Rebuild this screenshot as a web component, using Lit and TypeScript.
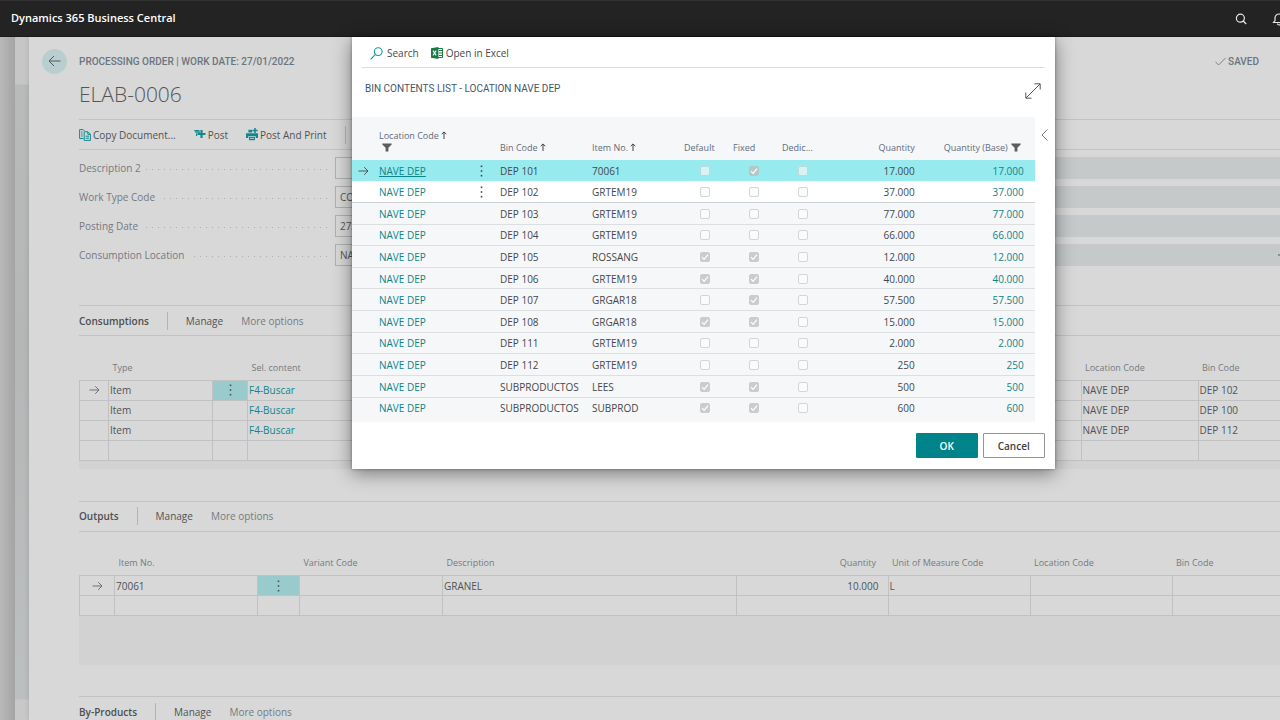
import { LitElement, html, css, svg, nothing } from "lit";
import { customElement } from "lit/decorators.js";
import { classMap } from "lit/directives/class-map.js";

type BinRow = [bin: string, item: string, def: boolean, fixed: boolean, qty: string];

const BINS: BinRow[] = [
  ["DEP 101", "70061", false, true, "17.000"],
  ["DEP 102", "GRTEM19", false, false, "37.000"],
  ["DEP 103", "GRTEM19", false, false, "77.000"],
  ["DEP 104", "GRTEM19", false, false, "66.000"],
  ["DEP 105", "ROSSANG", true, true, "12.000"],
  ["DEP 106", "GRTEM19", true, true, "40.000"],
  ["DEP 107", "GRGAR18", false, true, "57.500"],
  ["DEP 108", "GRGAR18", true, true, "15.000"],
  ["DEP 111", "GRTEM19", false, false, "2.000"],
  ["DEP 112", "GRTEM19", false, false, "250"],
  ["SUBPRODUCTOS", "LEES", true, true, "500"],
  ["SUBPRODUCTOS", "SUBPROD", true, true, "600"],
];

const FIELDS: [label: string, value: string][] = [
  ["Description 2", ""],
  ["Work Type Code", "CONS"],
  ["Posting Date", "27/01/2022"],
  ["Consumption Location", "NAVE DEP"],
];

const CONSUMPTION_BINS = ["DEP 102", "DEP 100", "DEP 112"];

const arrowRight = svg`<path d="M0.5 5H10M6.2 1.2L10 5L6.2 8.8" fill="none" stroke="currentColor" stroke-width="0.9"/>`;
const rowArrow = html`<svg class="row-arrow" width="11" height="10" viewBox="0 0 11 10">${arrowRight}</svg>`;
const dots = html`<svg width="3" height="12" viewBox="0 0 3 12" fill="currentColor">
  <rect x="0.7" y="0.5" width="1.6" height="1.6" /><rect x="0.7" y="5.2" width="1.6" height="1.6" /><rect x="0.7" y="9.9" width="1.6" height="1.6" />
</svg>`;
const funnel = html`<svg class="funnel" width="10" height="9" viewBox="0 0 10 9"><path d="M0.3 0.5H9.7V1.6L6.4 4.8V8.5H3.6V4.8L0.3 1.6Z" fill="#5c5c5c"/></svg>`;
const sortUp = html`<svg class="sort" width="6" height="8" viewBox="0 0 6 8"><path d="M3 8V1M0.7 3.2L3 0.9L5.3 3.2" fill="none" stroke="#444" stroke-width="1"/></svg>`;

@customElement("app-root")
export class AppRoot extends LitElement {
  static styles = css`
    :host {
      display: flex;
      flex-direction: column;
      height: 100vh;
      overflow: hidden;
      font-family: "Open Sans", "Noto Sans", sans-serif;
      font-size: 10px;
      line-height: 14px;
      color: #505355;
      background: #d8d8d8;
    }
    * { box-sizing: border-box; }
    svg { display: block; flex: none; }
    button {
      font: inherit;
      color: inherit;
      background: none;
      border: 0;
      padding: 0;
      margin: 0;
      display: flex;
      align-items: center;
      white-space: nowrap;
    }
    a { color: #0d858b; text-decoration: none; font-weight: 500; }
    h1, h2, h3 { margin: 0; font-size: inherit; font-weight: 400; }

    .topbar {
      flex: none;
      height: 37px;
      display: flex;
      align-items: center;
      padding: 0 0 2px 11px;
      background: #232323;
      border-top: 1px solid #333;
      border-bottom: 1px solid #1a1a1a;
      color: #fff;
      overflow: hidden;
    }
    .brand { font-size: 11px; font-weight: 600; color: #fff; margin-right: auto; }
    .top-icons { display: flex; gap: 25px; margin-right: -6px; padding-top: 3px; }

    .stage {
      position: relative;
      flex: 1;
      min-height: 0;
      display: flex;
      padding-left: 15px;
      background: linear-gradient(90deg, #b9b9b9 0, #a4a4a4 15px);
    }
    .under {
      flex: 1;
      min-width: 0;
      display: flex;
      padding-left: 14px;
      background: linear-gradient(180deg, #c6c6c6 0, #c6c6c6 47px, #b9bbbb 48px, #b5b6b6 300px, #bcbfc0 662px, #c8c8c8 663px);
    }
    .sheet {
      flex: 1;
      min-width: 0;
      background: #d8d8d8;
      padding: 11px 0 0 13px;
      box-shadow: -1px 0 4px rgba(0, 0, 0, 0.1);
      overflow: hidden;
    }
    .head { display: flex; align-items: center; height: 26px; }
    .back {
      width: 25px;
      height: 25px;
      border-radius: 50%;
      background: #b9cfcf;
      justify-content: center;
      margin-right: 12px;
      color: #505a5c;
    }
    .caption { font-family: Roboto, "Open Sans", sans-serif; font-weight: 500; color: #6b7580; padding-top: 1px; }
    .saved { margin-left: auto; padding-right: 21px; display: flex; align-items: center; gap: 2px; }
    .content { padding-left: 37px; }
    .title { font-size: 21px; line-height: 28px; font-weight: 300; padding: 6px 0 11px; color: #555; }

    .actions {
      height: 31px;
      display: flex;
      align-items: center;
      border-top: 1px solid #c2c4c4;
      border-bottom: 1px solid #c2c4c4;
      gap: 18px;
    }
    .actions button { gap: 2px; }
    .bar { width: 1px; height: 18px; background: #b2b4b6; }
    .actions .bar { margin-right: auto; }

    .fields {
      display: grid;
      grid-template-columns: 1fr 1fr;
      column-gap: 20px;
      row-gap: 7px;
      padding: 7px 0 39px;
    }
    .field { display: flex; align-items: center; height: 22px; }
    .field label { color: #727a82; white-space: nowrap; }
    .leader {
      height: 1px;
      margin: 2px 8px 0 5px;
      flex: 1;
      background: repeating-linear-gradient(270deg, #aaadb0 0, #aaadb0 1px, transparent 1px, transparent 6px);
    }
    .name { width: 256px; display: flex; align-items: center; }
    .field input {
      flex: 1;
      min-width: 0;
      height: 22px;
      font: inherit;
      color: #555;
      background: transparent;
      border: 1px solid #aeb0b2;
      padding: 0 4px;
    }
    .field .locked { background: #c5c9ca; border-color: #c5c9ca; }
    .assist { position: relative; }
    .more { position: absolute; right: 0; height: 22px; }

    .part {
      height: 31px;
      display: flex;
      align-items: center;
      gap: 18px;
      border-top: 1px solid #c2c4c4;
      border-bottom: 1px solid #c2c4c4;
    }
    .part h3 { font-weight: 600; color: #4c4f50; }
    .part .soft { color: #747b82; }

    table { border-collapse: collapse; table-layout: fixed; width: 100%; }
    th { font-weight: 400; font-size: 9px; line-height: 12px; text-align: left; white-space: nowrap; padding: 0; }
    td { padding: 0; white-space: nowrap; }

    .lines th { height: 44px; vertical-align: bottom; padding: 0 4px 6px; color: #747b82; }
    .lines td { height: 20px; border: 1px solid #bfc1c2; padding: 0 1px; }
    .lines td:last-child { border-right: 0; }
    .lines td.num { text-align: right; padding-right: 9px; }
    .lines th.num { text-align: right; padding-right: 12px; }
    .lines .mark { color: #666; }
    .lines svg { margin: 0 auto; }
    .lines .pick { background: #99cbcc; color: #456; }
    .filler { background: #d2d2d2; }
    .filler.short { height: 8px; margin-bottom: 32px; }
    .filler.tall { height: 49px; margin-bottom: 31px; }

    .dialog {
      position: absolute;
      top: 0;
      left: 27.5%;
      right: 17.6%;
      background: #fff;
      box-shadow: 0 4px 18px rgba(0, 0, 0, 0.45), 0 0 3px rgba(0, 0, 0, 0.35);
      color: #44484b;
    }
    .tools {
      display: flex;
      align-items: center;
      height: 31px;
      margin: 0 10px;
      padding: 2px 0 0 8px;
      border-bottom: 1px solid #dcdddd;
      gap: 12px;
    }
    .tools button { gap: 3px; }
    .tools .find { gap: 4px; }
    .dialog-head { display: flex; align-items: center; justify-content: space-between; height: 49px; padding: 0 14px 8px 13px; }
    .dialog-head .caption { font-weight: 400; color: #44566c; }
    .dialog-head button { padding-top: 4px; }
    .grid-wrap { display: flex; align-items: flex-start; }
    .grid-box { flex: 1; min-width: 0; background: #f6f7f9; padding-bottom: 4px; }
    .expander { width: 20px; justify-content: center; padding-top: 12px; }
    .bins { height: 301px; }
    .bins th { height: 43px; vertical-align: bottom; padding-bottom: 6px; color: #5f6c7b; }
    .bins th svg { display: inline-block; }
    .bins .funnel { margin-left: 3px; vertical-align: -1px; }
    .bins .sort { margin-left: 2px; }
    .bins td { padding-top: 1px; }
    .bins tbody tr { border-bottom: 1px solid #dcdfe2; }
    .bins tbody tr:last-child { border-bottom: 0; }
    .bins tbody tr.current { background: #97ebee; border-bottom-color: #97ebee; }
    .bins tbody tr.hover { background: #fff; border-bottom-color: #cfd2d5; }
    .bins .lead svg { margin-left: 6px; }
    .bins .gap { padding-left: 8px; }
    .bins .num { text-align: right; padding-right: 8px; }
    .bins .num.last { padding-right: 11px; }
    .bins th.num.last { padding-right: 14px; }
    .bins .tick { padding-left: 24px; }
    .current .loc { text-decoration: underline; }
    .tick input {
      appearance: none;
      display: block;
      width: 10px;
      height: 10px;
      margin: 0;
      border: 1px solid #d3d5d6;
      border-radius: 2px;
      background: #fafbfb;
    }
    .current .tick input { background: #d9f3f4; border-color: #bcdadb; }
    .tick input:checked,
    .current .tick input:checked {
      border-color: #cbcdcd;
      background: #cbcdcd url("data:image/svg+xml,%3Csvg xmlns='http://www.w3.org/2000/svg' viewBox='0 0 8 8'%3E%3Cpath d='M1 4.2L3.1 6.3L7 1.6' fill='none' stroke='white' stroke-width='1.2'/%3E%3C/svg%3E") center / 8px 8px no-repeat;
    }
    .current .tick input:checked { background-color: #b5c8c8; border-color: #b5c8c8; }

    .buttons { display: flex; justify-content: flex-end; gap: 5px; padding: 11px 10px 11px 0; }
    .buttons button {
      width: 62px;
      height: 25px;
      justify-content: center;
      border: 1px solid #929496;
      border-radius: 1px;
      font-weight: 600;
      color: #3c3f42;
    }
    .buttons .ok { background: #008489; border-color: #008489; color: #fff; }
  `;

  private part(title: string) {
    return html`<div class="part">
      <h3>${title}</h3>
      <span class="bar"></span>
      <button>Manage</button>
      <button class="soft">More options</button>
    </div>`;
  }

  private tick(label: string, on: boolean) {
    return html`<td class="tick"><input type="checkbox" aria-label=${label} .checked=${on} disabled /></td>`;
  }

  private sheet() {
    return html`
      <main class="sheet">
        <div class="head">
          <button class="back" aria-label="Back">
            <svg width="13" height="12" viewBox="0 0 13 12"><path d="M12.5 6H1M6 1L1 6L6 11" fill="none" stroke="currentColor" /></svg>
          </button>
          <h1 class="caption">PROCESSING ORDER | WORK DATE: 27/01/2022</h1>
          <span class="saved caption">
            <svg width="11" height="9" viewBox="0 0 11 9"><path d="M0.5 4.8L3.6 8L10.5 1" fill="none" stroke="#7b848c" /></svg>SAVED
          </span>
        </div>
        <div class="content">
          <h2 class="title">ELAB-0006</h2>
          <div class="actions">
            <button>
              <svg width="12" height="12" viewBox="0 0 12 12" fill="none" stroke="#12888e">
                <path d="M4.5 9.5H0.6V0.6H4.2L5.6 2" /><path d="M2 3H3.6M2 5H3.6M2 7H3.6" />
                <path d="M5.2 2.8H9L11.4 5.2V11.4H5.2Z M8.8 3V5.4H11.2" /><path d="M6.6 7.2H10M6.6 9.2H10" />
              </svg>Copy Document...
            </button>
            <button>
              <svg width="12" height="11" viewBox="0 0 12 11">
                <path d="M7.5 1V9M3.5 5H11.5" stroke="#12888e" stroke-width="2.2" fill="none" />
                <path d="M0.3 1.6H5.4M1.2 3.2H6M2.6 4.6V7" stroke="#12888e" stroke-width="1.2" fill="none" />
              </svg>Post
            </button>
            <button>
              <svg width="12" height="13" viewBox="0 0 12 13">
                <path d="M0 5.2H12V10H9.8V8.2H2.2V10H0Z" fill="#12888e" />
                <path d="M3 9H9V12.2H3Z" fill="#12888e" /><path d="M4 10.4H8" stroke="#d8d8d8" stroke-width="0.8" />
                <path d="M2.4 4.4V1.8H6.2V4.4Z" fill="#12888e" />
                <path d="M9 0V5M6.6 2.4H11.6" stroke="#12888e" stroke-width="1.5" />
              </svg>Post And Print
            </button>
            <span class="bar"></span>
          </div>
          <div class="fields">
            ${FIELDS.map(
              ([label, value], i) => html`
                <div class="field">
                  <span class="name"><label for="field-${i}">${label}</label><span class="leader"></span></span>
                  <input id="field-${i}" type="text" .value=${value} />
                </div>
                <div class="field assist">
                  <input class="locked" type="text" aria-label="Details ${i + 1}" readonly />
                  ${i === 3
                    ? html`<button class="more" aria-label="Show more">
                        <svg width="2" height="2" viewBox="0 0 2 2"><path d="M0 1H2" stroke="#555" /></svg>
                      </button>`
                    : nothing}
                </div>
              `,
            )}
          </div>

          ${this.part("Consumptions")}
          <table class="lines">
            <colgroup>
              <col width="29" /><col width="104" /><col width="35" /><col /><col width="117" /><col width="82" />
            </colgroup>
            <thead>
              <tr><th></th><th>Type</th><th></th><th>Sel. content</th><th>Location Code</th><th>Bin Code</th></tr>
            </thead>
            <tbody>
              ${CONSUMPTION_BINS.map(
                (bin, i) => html`<tr>
                  <td class="mark">${i === 0 ? rowArrow : nothing}</td>
                  <td>Item</td>
                  <td class=${classMap({ pick: i === 0 })}>${i === 0 ? dots : nothing}</td>
                  <td><a href="#">F4-Buscar</a></td>
                  <td>NAVE DEP</td>
                  <td>${bin}</td>
                </tr>`,
              )}
              <tr><td></td><td></td><td></td><td></td><td></td><td></td></tr>
            </tbody>
          </table>
          <div class="filler short"></div>

          ${this.part("Outputs")}
          <table class="lines">
            <colgroup>
              <col width="35" /><col width="143" /><col width="42" /><col width="143" /><col /><col width="152" />
              <col width="142" /><col width="142" /><col width="108" />
            </colgroup>
            <thead>
              <tr>
                <th></th><th>Item No.</th><th></th><th>Variant Code</th><th>Description</th><th class="num">Quantity</th>
                <th>Unit of Measure Code</th><th>Location Code</th><th>Bin Code</th>
              </tr>
            </thead>
            <tbody>
              <tr>
                <td class="mark">${rowArrow}</td><td>70061</td><td class="pick">${dots}</td><td></td><td>GRANEL</td>
                <td class="num">10.000</td><td>L</td><td></td><td></td>
              </tr>
              <tr><td></td><td></td><td></td><td></td><td></td><td></td><td></td><td></td><td></td></tr>
            </tbody>
          </table>
          <div class="filler tall"></div>

          ${this.part("By-Products")}
        </div>
      </main>
    `;
  }

  private dialog() {
    return html`
      <section class="dialog" role="dialog" aria-label="Bin Contents List">
        <div class="tools">
          <button class="find">
            <svg width="13" height="13" viewBox="0 0 13 13" fill="none" stroke="#12989e" stroke-width="1.1">
              <circle cx="8.2" cy="4.6" r="3.9" /><path d="M5.4 7.4L0.6 12.4" />
            </svg>Search
          </button>
          <button>
            <svg width="12" height="12" viewBox="0 0 12 12">
              <path d="M7 1.5H11.5V10.5H7" fill="#fff" stroke="#187a45" />
              <path d="M8 3.5H11M8 6H11M8 8.5H11" stroke="#187a45" stroke-width="1.1" />
              <path d="M0 1.2L7.4 0V12L0 10.8Z" fill="#187a45" />
              <path d="M2 3.6L5.2 8.4M5.2 3.6L2 8.4" stroke="#fff" stroke-width="1.1" />
            </svg>Open in Excel
          </button>
        </div>
        <div class="dialog-head">
          <h2 class="caption">BIN CONTENTS LIST - LOCATION NAVE DEP</h2>
          <button aria-label="Expand">
            <svg width="16" height="16" viewBox="0 0 16 16" fill="none" stroke="#555">
              <path d="M1 15L15 1M9.5 0.8H15.2V6.5M0.8 9.5V15.2H6.5" />
            </svg>
          </button>
        </div>
        <div class="grid-wrap">
          <div class="grid-box">
            <table class="bins">
              <colgroup>
                <col width="27" /><col width="93" /><col width="20" /><col width="92" /><col width="92" /><col width="49" />
                <col width="49" /><col width="49" /><col /><col width="112" />
              </colgroup>
              <thead>
                <tr>
                  <th></th>
                  <th>Location Code${sortUp}<br />${funnel}</th>
                  <th></th>
                  <th class="gap">Bin Code${sortUp}</th>
                  <th class="gap">Item No.${sortUp}</th>
                  <th class="gap">Default</th>
                  <th class="gap">Fixed</th>
                  <th class="gap">Dedic...</th>
                  <th class="num">Quantity</th>
                  <th class="num last">Quantity (Base)${funnel}</th>
                </tr>
              </thead>
              <tbody>
                ${BINS.map(
                  ([bin, item, def, fixed, qty], i) => html`<tr class=${classMap({ current: i === 0, hover: i === 1 })}>
                    <td class="lead">${i === 0 ? rowArrow : nothing}</td>
                    <td><a class="loc" href="#">NAVE DEP</a></td>
                    <td class="gap">${i < 2 ? dots : nothing}</td>
                    <td class="gap">${bin}</td>
                    <td class="gap">${item}</td>
                    ${this.tick("Default", def)}${this.tick("Fixed", fixed)}${this.tick("Dedicated", false)}
                    <td class="num">${qty}</td>
                    <td class="num last"><a href="#">${qty}</a></td>
                  </tr>`,
                )}
              </tbody>
            </table>
          </div>
          <button class="expander" aria-label="Show details">
            <svg width="7" height="12" viewBox="0 0 7 12"><path d="M6.5 0.5L1 6L6.5 11.5" fill="none" stroke="#777" /></svg>
          </button>
        </div>
        <div class="buttons">
          <button class="ok">OK</button>
          <button>Cancel</button>
        </div>
      </section>
    `;
  }

  render() {
    return html`
      <header class="topbar">
        <a class="brand" href="#">Dynamics 365 Business Central</a>
        <div class="top-icons">
          <button aria-label="Search">
            <svg width="12" height="12" viewBox="0 0 12 12" fill="none" stroke="#e6e6e6" stroke-width="1.2">
              <circle cx="5.4" cy="5.2" r="4" /><path d="M8.2 8L11.2 11" />
            </svg>
          </button>
          <button aria-label="Notifications">
            <svg width="14" height="13" viewBox="0 0 14 13" fill="none" stroke="#e6e6e6" stroke-width="1.2">
              <path d="M1.5 9.5H12.5L11 7.5V5A4 4 0 0 0 3 5V7.5Z" /><path d="M5.5 10.5A1.5 1.5 0 0 0 8.5 10.5" />
            </svg>
          </button>
        </div>
      </header>
      <div class="stage">
        <div class="under">${this.sheet()}</div>
        ${this.dialog()}
      </div>
    `;
  }
}
